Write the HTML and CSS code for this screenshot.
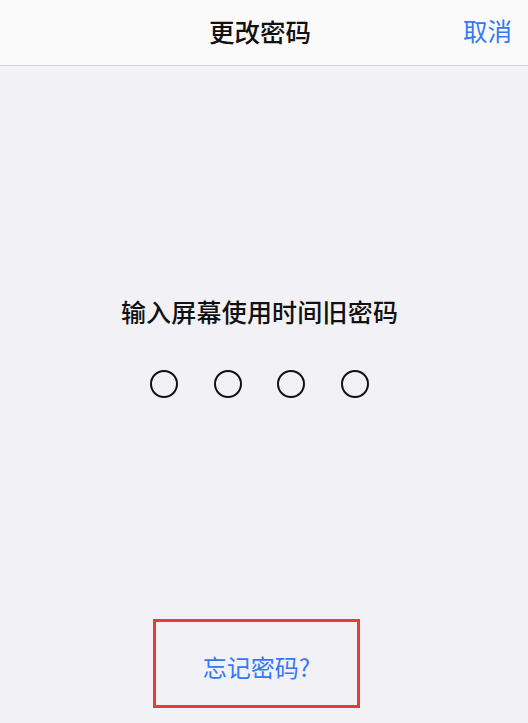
FILE: index.html
```html
<!DOCTYPE html>
<html lang="zh">
<head>
<meta charset="utf-8">
<title>更改密码</title>
<link rel="stylesheet" href="styles.css">
</head>
<body>
<header class="nav">
  <div class="nav-title">更改密码</div>
  <div class="nav-cancel">取消</div>
</header>
<main class="content">
  <div class="prompt">输入屏幕使用时间旧密码</div>
  <div class="dots">
    <span class="dot"></span>
    <span class="dot"></span>
    <span class="dot"></span>
    <span class="dot"></span>
  </div>
  <div class="forgot">忘记密码?</div>
</main>
</body>
</html>
```
FILE: styles.css
```css
html, body {
  margin: 0;
  padding: 0;
}
body {
  width: 528px;
  height: 723px;
  overflow: hidden;
  background: #f2f1f6;
  font-family: "Noto Sans CJK SC", "Noto Sans", sans-serif;
}
.nav {
  height: 65px;
  background: #fafafa;
  border-bottom: 1px solid #d6d6d8;
  position: relative;
  display: flex;
  align-items: center;
  justify-content: center;
  padding-right: 8px;
}
.nav-title {
  font-size: 25.5px;
  font-weight: 500;
  color: #111;
  line-height: 30px;
  margin-top: -3px;
}
.nav-cancel {
  position: absolute;
  right: 16px;
  top: 16px;
  font-size: 24.5px;
  line-height: 30px;
  color: #3478f6;
}
.content {
  display: flex;
  flex-direction: column;
  align-items: center;
  padding-right: 9px;
}
.prompt {
  margin-top: 230px;
  font-size: 25px;
  line-height: 30px;
  font-weight: 500;
  color: #111;
  letter-spacing: 0.2px;
}
.dots {
  margin-top: 44px;
  display: flex;
  gap: 35.5px;
}
.dot {
  width: 24px;
  height: 24px;
  border: 2px solid #111;
  border-radius: 50%;
}
.forgot {
  margin-top: 221px;
  align-self: flex-start;
  margin-left: 153px;
  width: 201px;
  height: 53px;
  border: 3px solid #e63b3b;
  padding-top: 30px;
  text-align: center;
  font-size: 24px;
  line-height: 30px;
  color: #3478f6;
}
```
